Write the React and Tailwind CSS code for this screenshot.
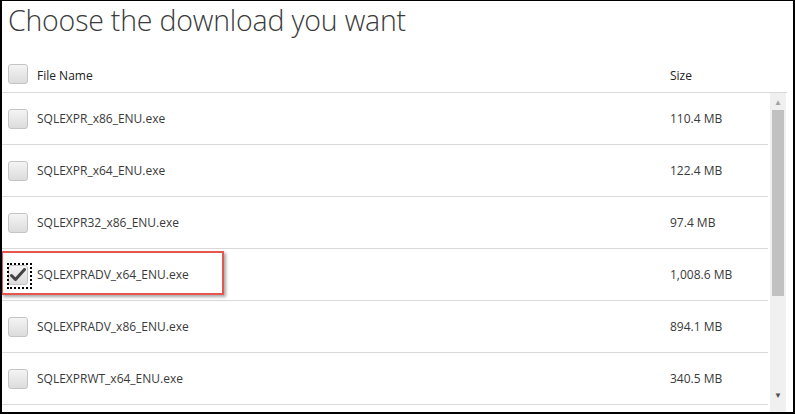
import { useState } from "react";

const files = [
  { name: "SQLEXPR_x86_ENU.exe", size: "110.4 MB" },
  { name: "SQLEXPR_x64_ENU.exe", size: "122.4 MB" },
  { name: "SQLEXPR32_x86_ENU.exe", size: "97.4 MB" },
  { name: "SQLEXPRADV_x64_ENU.exe", size: "1,008.6 MB", checked: true },
  { name: "SQLEXPRADV_x86_ENU.exe", size: "894.1 MB" },
  { name: "SQLEXPRWT_x64_ENU.exe", size: "340.5 MB" },
];

const Box = ({ checked, focused }) => (
  <span className="relative flex h-[20px] w-[20px] shrink-0 items-center justify-center rounded-[3px] border border-[#c4c4c4] bg-gradient-to-b from-[#f4f4f4] to-[#dcdcdc]">
    {checked && (
      <svg width="16" height="14" viewBox="0 0 16 14">
        <path d="M1.5 7.5 L5.5 11.5 L14.5 1.5" fill="none" stroke="#444" strokeWidth="3" strokeLinecap="round" strokeLinejoin="round" />
      </svg>
    )}
    {focused && (
      <span className="absolute -left-[2px] -top-[3px] -right-[5px] -bottom-[5px] border-2 border-dotted border-black" />
    )}
  </span>
);

const App = () => {
  const [rows] = useState(files);

  return (
    <div className="h-[414px] w-[795px] overflow-hidden border-t border-l-2 border-r-2 border-b-2 border-black bg-white font-['Open_Sans','Segoe_UI',sans-serif] text-[#3a3a3a]">
      <div className="h-[55px] pl-[6px] text-[28.5px] font-light leading-[38px] tracking-[-0.2px] text-[#3b3b3b]">
        Choose the download you want
      </div>

      <div className="mr-[6px] flex h-[37px] items-center border-b border-[#d9d9d9] pl-[6px] text-[12px]">
        <Box />
        <span className="ml-[9px] w-[633px] pt-[3px] font-medium text-[#222]">File Name</span>
        <span className="pt-[3px] font-medium text-[#222]">Size</span>
      </div>

      <div className="flex h-[320px] gap-[2px] pr-[7px]">
        <div className="flex-1 overflow-hidden">
          {rows.map((f, i) => (
            <div key={i} className="relative flex h-[52px] shrink-0 items-center border-b border-[#d9d9d9] pl-[6px] text-[12px]">
              <Box checked={f.checked} focused={f.checked} />
              <span className="ml-[9px] w-[633px]">{f.name}</span>
              <span>{f.size}</span>
              {f.checked && (
                <span className="pointer-events-none absolute left-[-1px] top-[2px] h-[44px] w-[223px] border-2 border-[#e5574c] shadow-[2px_2px_3px_rgba(0,0,0,0.35)]" />
              )}
            </div>
          ))}
        </div>

        <div className="flex w-[16px] flex-col bg-[#f0f0f0]">
          <div className="flex h-[17px] items-center justify-center text-[8px] leading-none text-[#a3a3a3]">▲</div>
          <div className="mx-[2px] h-[186px] bg-[#c1c1c1]" />
          <div className="flex-1" />
          <div className="flex h-[22px] items-start justify-center text-[8px] leading-none text-[#505050]">▼</div>
        </div>
      </div>
    </div>
  );
};

export default App;
